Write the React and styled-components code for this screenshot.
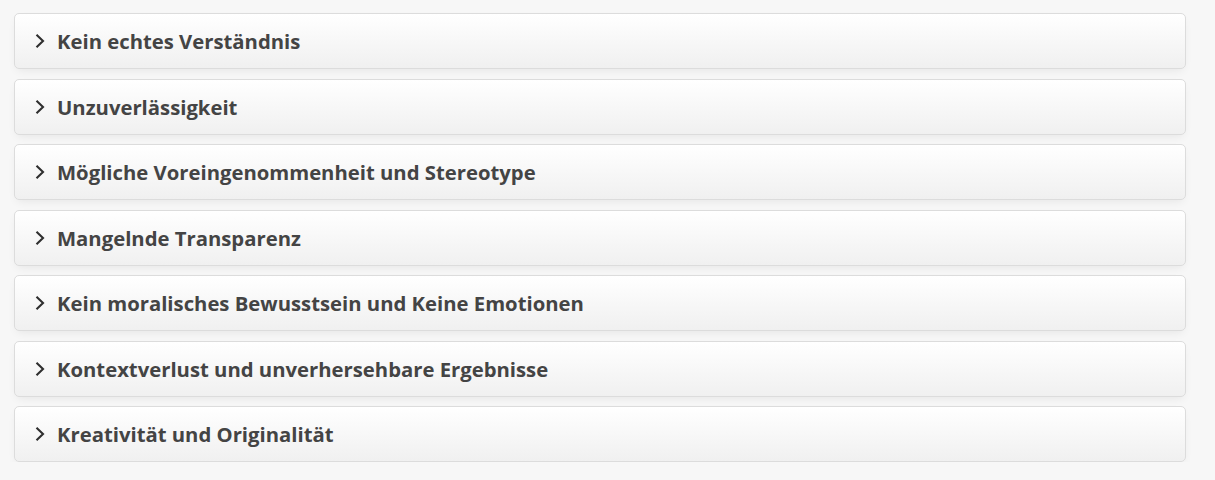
import React from "react";
import styled, { createGlobalStyle } from "styled-components";

const GlobalStyle = createGlobalStyle`
  html, body {
    margin: 0;
    background: #f7f7f7;
    font-family: "Open Sans", "Noto Sans", sans-serif;
  }
`

const items = [
  "Kein echtes Verständnis",
  "Unzuverlässigkeit",
  "Mögliche Voreingenommenheit und Stereotype",
  "Mangelnde Transparenz",
  "Kein moralisches Bewusstsein und Keine Emotionen",
  "Kontextverlust und unverhersehbare Ergebnisse",
  "Kreativität und Originalität",
];

const List = styled.div`
  width: 1172px;
  padding: 13px 0 0 14px;
  display: flex;
  flex-direction: column;
  gap: 9.5px;
`

const Card = styled.div`
  height: 54px;
  border: 1px solid #dcdcdc;
  border-radius: 5px;
  background: linear-gradient(#ffffff, #f0f0f0);
  box-shadow: 0 4px 10px -3px rgba(0, 0, 0, 0.08);
  display: flex;
  align-items: center;
  padding-left: 19px;
  gap: 11px;
`

const Title = styled.span`
  font-size: 20.3px;
  font-weight: 700;
  color: #444;
`

const Chevron = () => (
  <svg width="12" height="16" viewBox="0 0 12 16">
    <path d="M2.5 1.8 L9 8 L2.5 14.2" fill="none" stroke="#2f2f2f" strokeWidth="2.1" />
  </svg>
);

const App = () => (
  <>
    <GlobalStyle />
    <List>
      {items.map((t) => (
        <Card key={t}>
          <Chevron />
          <Title>{t}</Title>
        </Card>
      ))}
    </List>
  </>
);

export default App;
